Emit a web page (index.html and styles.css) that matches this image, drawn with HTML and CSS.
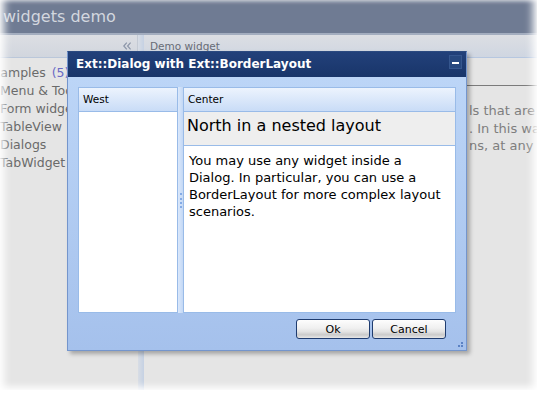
FILE: index.html
```html
<!DOCTYPE html>
<html>
<head>
<meta charset="utf-8">
<link rel="stylesheet" href="styles.css">
</head>
<body>
<div class="stage">
  <div class="app">
    <div class="app-title">widgets demo</div>
    <div class="app-strip"></div>
    <div class="app-main">
      <div class="side">
        <div class="side-head">
          <svg class="collapse" width="8" height="8" viewBox="0 0 8 8"><polyline points="3.8,0.6 0.8,4 3.8,7.4" /><polyline points="7.6,0.6 4.6,4 7.6,7.4" /></svg>
        </div>
        <ul class="tree">
          <li class="tree-root">Examples <span class="count">(5)</span></li>
          <li>Menu &amp; Tooltips</li>
          <li>Form widgets</li>
          <li>TableView</li>
          <li>Dialogs</li>
          <li>TabWidget</li>
        </ul>
      </div>
      <div class="split"></div>
      <div class="content">
        <div class="content-head">Demo widget</div>
        <div class="tabbar"></div>
        <div class="content-text">
          <p>ls that are</p>
          <p>. In this way</p>
          <p>ns, at any time</p>
        </div>
      </div>
    </div>
    <div class="fade"></div>
  </div>

  <div class="dialog">
    <div class="dlg-title">
      <span>Ext::Dialog with Ext::BorderLayout</span>
      <span class="dlg-min"></span>
    </div>
    <div class="dlg-body">
      <div class="layout">
        <div class="panel west">
          <div class="panel-head">West</div>
          <div class="panel-body"></div>
        </div>
        <div class="splitter"><span class="dots"></span></div>
        <div class="panel center">
          <div class="panel-head">Center</div>
          <div class="north">North in a nested layout</div>
          <div class="center-body">You may use any widget inside a Dialog. In particular, you can use a BorderLayout for more complex layout scenarios.</div>
        </div>
      </div>
      <div class="dlg-foot">
        <button class="btn">Ok</button>
        <button class="btn">Cancel</button>
      </div>
    </div>
    <svg class="grip" width="7" height="7" viewBox="0 0 7 7"><rect x="4" y="0" width="2" height="2"/><rect x="1" y="3" width="2" height="2"/><rect x="4" y="3" width="2" height="2"/></svg>
  </div>
</div>
</body>
</html>
```
FILE: styles.css
```css
* { box-sizing: border-box; }
html, body { margin: 0; padding: 0; background: #fff; }
body {
  width: 546px;
  height: 400px;
  overflow: hidden;
  font-family: "DejaVu Sans", Verdana, sans-serif;
}
.stage { position: relative; width: 546px; height: 400px; }

/* background application (dimmed) */
.app {
  position: relative;
  width: 537px;
  height: 390px;
  display: flex;
  flex-direction: column;
  background: #e5e5e5;
  overflow: hidden;
}
.app-title {
  flex: none;
  height: 33px;
  background: #6f7b93;
  color: #d3d7df;
  font-size: 16px;
  line-height: 33px;
  padding-left: 3px;
}
.app-strip { flex: none; height: 2px; background: #a3adbf; }
.app-main { flex: 1; display: flex; min-height: 0; }
.side { flex: none; width: 138px; display: flex; flex-direction: column; overflow: hidden; }
.side-head {
  height: 23px;
  background: linear-gradient(#dcdee3, #d1d6de);
  border-bottom: 1px solid #bac7da;
  border-right: 1px solid #c4cad4;
  display: flex;
  justify-content: flex-end;
  align-items: center;
  padding-right: 6px;
}
.collapse polyline { fill: none; stroke: #8b95a8; stroke-width: 1.2; }
.tree {
  list-style: none;
  margin: 0;
  padding: 6px 0 0 0;
  font-size: 12.5px;
  line-height: 18px;
  color: #6a6a6a;
  white-space: nowrap;
}
.tree-root { margin-left: -15px; }
.count { color: #6a6ac6; margin-left: 2px; }
.split { flex: none; width: 6px; background: linear-gradient(90deg, #d8dde5, #c5d1e3); }
.content { flex: 1; display: flex; flex-direction: column; min-width: 0; }
.content-head {
  height: 23px;
  background: linear-gradient(#dcdee3, #cfd6e1);
  border-bottom: 1px solid #b6c7e0;
  font-size: 10.5px;
  line-height: 23px;
  padding-left: 6px;
  color: #676c76;
}
.tabbar { height: 28px; border-bottom: 1px solid #7b7b7b; }
.content-text {
  padding: 16px 0 0 325px;
  font-size: 13px;
  line-height: 17.5px;
  color: #7e7e7e;
  white-space: nowrap;
}
.content-text p { margin: 0; }
.fade {
  position: absolute;
  inset: 0;
  pointer-events: none;
  box-shadow:
    inset 10px 0 8px -6px #fff,
    inset -10px 0 8px -6px #fff,
    inset 0 -8px 7px -5px #fff,
    inset 0 4px 4px -3px rgba(255, 255, 255, 0.7);
}

/* dialog */
.dialog {
  position: absolute;
  left: 67px;
  top: 51px;
  width: 400px;
  height: 300px;
  border: 1px solid #7495cc;
  border-top-color: #2b4a80;
  box-shadow: 3px 3px 4px rgba(0, 0, 0, 0.28);
  display: flex;
  flex-direction: column;
  background: linear-gradient(#bed7f8, #a5c1ec);
}
.dlg-title {
  flex: none;
  height: 25px;
  background: linear-gradient(#22417a, #19356a);
  color: #fff;
  font-size: 12px;
  font-weight: bold;
  line-height: 25px;
  padding: 0 4px 0 8px;
  display: flex;
  justify-content: space-between;
}
.dlg-min {
  align-self: flex-start;
  margin-top: 3px;
  width: 13px;
  height: 14px;
  background: #27487f;
  border: 1px solid #35568e;
  display: flex;
  justify-content: center;
  align-items: center;
  padding-top: 2px;
}
.dlg-min::before { content: ""; width: 7px; height: 2px; background: #fff; }
.dlg-body {
  flex: 1;
  display: flex;
  flex-direction: column;
  padding: 10px 10px 11px;
}
.layout { height: 226px; display: flex; }
.panel {
  border: 1px solid #99bbe8;
  background: #fff;
  display: flex;
  flex-direction: column;
}
.west { flex: none; width: 100px; }
.center { flex: 1; min-width: 0; }
.panel-head {
  flex: none;
  height: 24px;
  border-bottom: 1px solid #99bbe8;
  background: linear-gradient(#ecf3fd, #c9dcf7);
  font-size: 10.5px;
  line-height: 23px;
  padding-left: 4px;
  color: #000;
}
.panel-body { flex: 1; }
.splitter {
  flex: none;
  width: 5px;
  display: flex;
  align-items: center;
  justify-content: center;
  background: linear-gradient(90deg, #dbe8fb, #c3d8f5);
}
.dots { width: 2px; height: 15px; border-left: 2px dotted #84abe6; }
.north {
  flex: none;
  height: 34px;
  border-bottom: 1px solid #99bbe8;
  background: #eeeeee;
  font-size: 16px;
  line-height: 28px;
  padding-left: 3px;
  white-space: nowrap;
}
.center-body {
  flex: 1;
  padding: 6px 5px;
  font-size: 13px;
  line-height: 17px;
  color: #000;
}
.dlg-foot {
  display: flex;
  justify-content: flex-end;
  gap: 2px;
  margin-top: 6px;
  padding-right: 10px;
}
.btn {
  width: 74px;
  height: 20px;
  padding: 0;
  border: 1px solid #1f3c6f;
  border-radius: 3px;
  background: linear-gradient(#fdfdfd 0%, #f0f0f0 45%, #e2e2e2 65%, #cbcbcb 82%, #e6e6e6 100%);
  font-family: "DejaVu Sans", Verdana, sans-serif;
  font-size: 11px;
  color: #000;
}
.grip { position: absolute; right: 2px; bottom: 1px; }
.grip rect { fill: #5b82c4; }
```
